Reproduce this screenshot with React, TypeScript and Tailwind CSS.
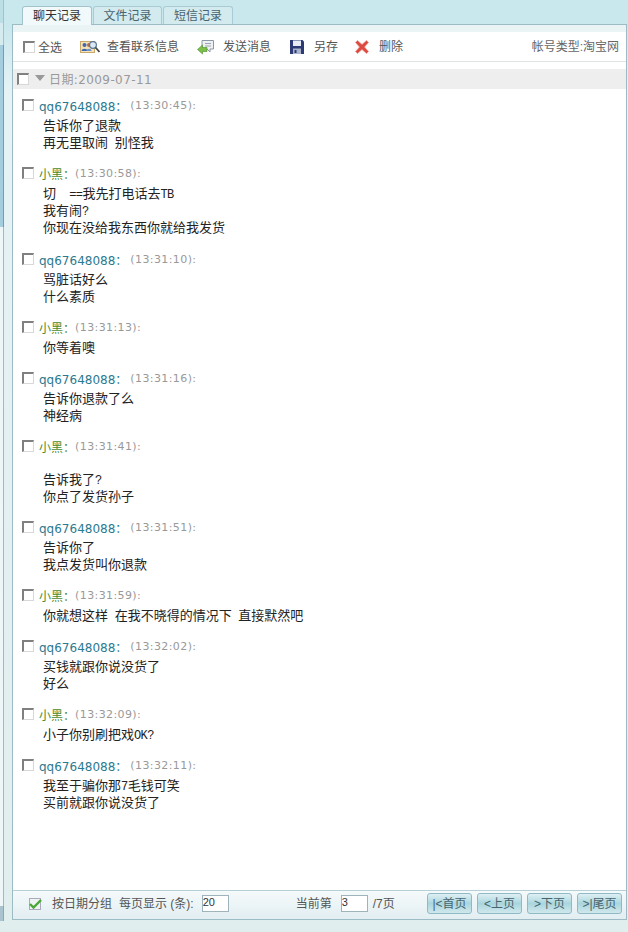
import React from "react";

const FONT = { fontFamily: '"Liberation Sans", "Noto Sans CJK SC", sans-serif' };
const NAME_FONT = { fontFamily: '"DejaVu Sans", "Noto Sans CJK SC", sans-serif' };

type Msg = { who: string; time: string; lines: string[]; gap?: boolean };

const messages: Msg[] = [
  { who: "qq67648088", time: "13:30:45", lines: ["告诉你了退款", "再无里取闹 别怪我"] },
  { who: "小黑", time: "13:30:58", lines: ["切  ==我先打电话去TB", "我有闹?", "你现在没给我东西你就给我发货"] },
  { who: "qq67648088", time: "13:31:10", lines: ["骂脏话好么", "什么素质"] },
  { who: "小黑", time: "13:31:13", lines: ["你等着噢"] },
  { who: "qq67648088", time: "13:31:16", lines: ["告诉你退款了么", "神经病"] },
  { who: "小黑", time: "13:31:41", lines: ["告诉我了?", "你点了发货孙子"], gap: true },
  { who: "qq67648088", time: "13:31:51", lines: ["告诉你了", "我点发货叫你退款"] },
  { who: "小黑", time: "13:31:59", lines: ["你就想这样 在我不晓得的情况下 直接默然吧"] },
  { who: "qq67648088", time: "13:32:02", lines: ["买钱就跟你说没货了", "好么"] },
  { who: "小黑", time: "13:32:09", lines: ["小子你别刷把戏OK?"] },
  { who: "qq67648088", time: "13:32:11", lines: ["我至于骗你那7毛钱可笑", "买前就跟你说没货了"] },
];

function Check({ className = "" }: { className?: string }) {
  return (
    <span
      className={`block w-3 h-3 shrink-0 border-t-2 border-l-2 border-r border-b border-t-[#808080] border-l-[#808080] border-r-[#d8d8d8] border-b-[#d8d8d8] bg-white ${className}`}
    />
  );
}

function ContactIcon() {
  return (
    <svg width="20" height="14" viewBox="0 0 20 14">
      <rect x="0.5" y="1.5" width="14" height="11" fill="#f3e3b8" stroke="#c9a86a" />
      <circle cx="4.5" cy="5" r="2" fill="#3f66b0" />
      <path d="M1.5 11c0-3 6-3 6 0z" fill="#3f66b0" />
      <circle cx="9" cy="5" r="2" fill="#b06a4a" />
      <path d="M6.5 11c0-3 5-3 5 0z" fill="#6f8fc8" />
      <circle cx="13" cy="5" r="3.4" fill="#dbe9f5" stroke="#5b7590" strokeWidth="1.2" />
      <path d="M15.5 7.5L19.5 12" stroke="#444" strokeWidth="1.8" />
    </svg>
  );
}

function SendIcon() {
  return (
    <svg width="18" height="16" viewBox="0 0 18 16">
      <path d="M5 1.5h11.5v8.5H13v3l-3-3H5z" fill="#eef0f2" stroke="#8d98a6" />
      <path d="M8 4.5h6M8 7h6" stroke="#9aa5b2" />
      <path d="M0.5 10.5L5.5 6v2.5h4.5v4H5.5V15z" fill="#7cc04a" stroke="#4c8f2a" strokeWidth="0.6" />
    </svg>
  );
}

function SaveIcon() {
  return (
    <svg width="14" height="14" viewBox="0 0 14 14">
      <path d="M0 0h12.5L14 1.5V14H0z" fill="#2d3a73" />
      <rect x="3" y="0.5" width="8" height="5.5" fill="#e8edf5" />
      <rect x="3" y="8.5" width="8" height="5.5" fill="#aab4cc" />
      <rect x="4.5" y="10" width="2" height="3" fill="#2d3a73" />
    </svg>
  );
}

function DeleteIcon() {
  return (
    <svg width="14" height="14" viewBox="0 0 14 14">
      <path d="M2.5 0.5L7 4.5l4.5-4 2 2L9.5 7l4 4.5-2 2L7 9.5l-4.5 4-2-2L4.5 7l-4-4.5z" fill="#dc4a40" stroke="#e89a90" strokeWidth="0.7" />
    </svg>
  );
}

function GreenCheck() {
  return (
    <span className="flex items-center justify-center w-3 h-3 border border-[#aab] bg-[#eef3f4]">
      <svg width="13" height="10" viewBox="0 0 13 10" className="shrink-0">
        <path d="M1 5l3.5 3.5L12 1" fill="none" stroke="#4aa836" strokeWidth="2.4" />
      </svg>
    </span>
  );
}

function PageButton({ label }: { label: string }) {
  return (
    <span className="flex items-center justify-center w-[45px] h-[21px] rounded-[3px] border border-[#8fb9c6] bg-gradient-to-b from-[#dff0f3] via-[#a9d6de] to-[#cfe8ec] text-[#47636e] text-[12px]">
      {label}
    </span>
  );
}

// latin runs in the chat lines are narrow, half the width of the CJK glyphs
function ChatLine({ text }: { text: string }) {
  const parts = text.split(/([ -~]+)/).filter(Boolean);
  return (
    <div className="h-[17px] whitespace-pre">
      {parts.map((part, i) =>
        /^[ -~]+$/.test(part) ? (
          <span
            key={i}
            className="text-[12px] tracking-[-0.6px] leading-none"
            style={{ fontFamily: '"Liberation Mono", monospace' }}
          >
            {part}
          </span>
        ) : (
          <span key={i}>{part}</span>
        )
      )}
    </div>
  );
}

function Message({ m }: { m: Msg }) {
  const isMe = m.who !== "小黑";
  return (
    <div className={m.lines.length === 3 ? "mb-[16px]" : "mb-[15px]"}>
      <div className="flex items-center h-[17px] pl-[9px]">
        <Check className="-mt-[3px]" />
        <span className={`ml-[5px] text-[12px] ${isMe ? "text-[#2b7a90]" : "text-[#4c8a2e]"}`} style={NAME_FONT}>
          {m.who}：
        </span>
        <span
          className={`text-[11px] text-[#999] tracking-[0.4px] ${isMe ? "ml-[3px]" : "ml-0"}`}
          style={NAME_FONT}
        >
          ({m.time}):
        </span>
      </div>
      <div className={`pl-[30px] text-[13px] leading-[17px] text-[#222] ${m.gap ? "pt-[15px]" : "pt-[2px]"}`}>
        {m.lines.map((line) => (
          <ChatLine key={line} text={line} />
        ))}
      </div>
    </div>
  );
}

export default function App() {
  return (
    <div
      className="w-[628px] h-[932px] overflow-hidden flex bg-gradient-to-b from-[#c9e8ee] from-[3%] via-[#e6f3f6] via-[10%] to-[#e0eeee]"
      style={FONT}
    >
      <div className="w-[4px] h-full flex flex-col">
        <div className="h-[23px] bg-[#bcdfe6] border-r border-[#a3c3cc]" />
        <div className="h-[22px] bg-[#d6ebef] border-r border-[#a3c3cc]" />
        <div className="h-[182px] bg-[#a4cde0] border-r border-[#6f9fb8]" />
        <div className="h-[679px] bg-[#eef6f8] border-r border-[#9dbbc4]" />
        <div className="h-[15px] bg-[#a9c4cf] border-r border-[#8aa9b5]" />
      </div>
      <div className="flex-1 min-w-0 flex flex-col pl-[8px] pr-[1px] pt-[6px] pb-[12px]">
        <div className="flex pl-[10px] gap-[1px] h-[18px] text-[12px] text-[#47636e]">
          <div className="w-[70px] h-[19px] z-10 flex items-center justify-center bg-[#f2f9fa] border border-b-0 border-[#a3c3cc] rounded-t-[3px] text-[#333]">
            聊天记录
          </div>
          <div className="w-[69px] flex items-center justify-center bg-[#d3eaee] border border-b-0 border-[#a9ccd4] rounded-t-[3px]">
            文件记录
          </div>
          <div className="w-[70px] flex items-center justify-center bg-[#d3eaee] border border-b-0 border-[#a9ccd4] rounded-t-[3px]">
            短信记录
          </div>
        </div>
        <div className="flex-1 min-h-0 flex flex-col border border-[#9dbbc4] bg-white">
          <div className="h-[7px] bg-[#eaf4f5]" />
          <div className="h-[30px] flex items-center pl-[10px] pr-[7px] text-[12px] text-[#555] border-b border-[#dfe3e3]">
            <Check />
            <span className="ml-[3px] mt-[3px]">全选</span>
            <span className="ml-[18px]"><ContactIcon /></span>
            <span className="ml-[7px]">查看联系信息</span>
            <span className="ml-[18px]"><SendIcon /></span>
            <span className="ml-[8px]">发送消息</span>
            <span className="ml-[19px]"><SaveIcon /></span>
            <span className="ml-[10px]">另存</span>
            <span className="ml-[17px]"><DeleteIcon /></span>
            <span className="ml-[10px]">删除</span>
            <span className="ml-auto text-[#666]">帐号类型:淘宝网</span>
          </div>
          <div className="mt-[7px] h-[20px] flex items-center pl-[4px] bg-[#eeeeee] text-[12px] text-[#999]">
            <Check />
            <span className="ml-[6px] mr-[4px] w-0 h-0 border-x-[5px] border-x-transparent border-t-[6px] border-t-[#999] -mt-[3px]" />
            <span className="mt-[2px] tracking-[0.4px]" style={NAME_FONT}>日期:2009-07-11</span>
          </div>
          <div className="flex-1 min-h-0 pt-[9px] overflow-hidden">
            {messages.map((m) => (
              <Message key={m.time} m={m} />
            ))}
          </div>
          <div className="h-[29px] flex items-center pl-[16px] pr-[4px] pb-[3px] border-t border-[#b7d0d8] bg-gradient-to-b from-[#f5fafb] to-[#e2eef2] text-[12px] text-[#555]">
            <GreenCheck />
            <span className="ml-[11px]">按日期分组</span>
            <span className="ml-[7px]">每页显示 (条):</span>
            <span className="ml-[8px] w-[27px] h-[17px] border border-[#9fb3bb] bg-white text-[11px] leading-[13px] text-[#333]">20</span>
            <span className="ml-[67px]">当前第</span>
            <span className="ml-[9px] w-[27px] h-[17px] border border-[#9fb3bb] bg-white text-[11px] leading-[13px] text-[#333]">3</span>
            <span className="ml-[5px]">/7页</span>
            <div className="ml-auto flex gap-[5px]">
              <PageButton label="|<首页" />
              <PageButton label="<上页" />
              <PageButton label=">下页" />
              <PageButton label=">|尾页" />
            </div>
          </div>
        </div>
      </div>
    </div>
  );
}
